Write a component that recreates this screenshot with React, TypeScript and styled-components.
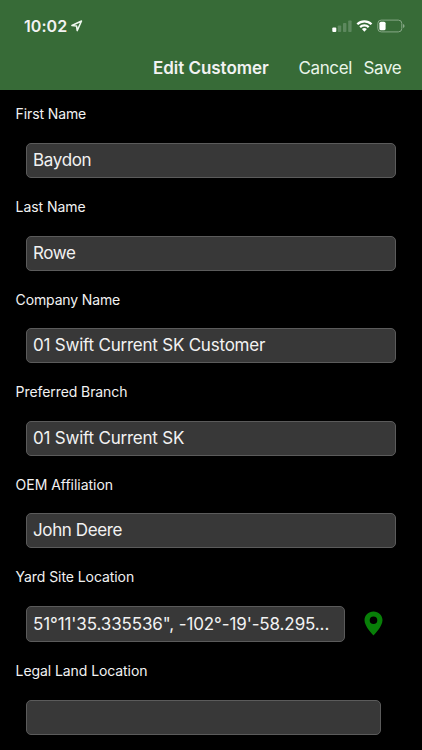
import React from "react";
import styled, { createGlobalStyle } from "styled-components";

const GlobalStyle = createGlobalStyle`
  * { box-sizing: border-box; }
  body { margin: 0; background: #000; overflow: hidden; }
`;

const Screen = styled.main`
  width: 422px;
  height: 750px;
  overflow: hidden;
  background: #000;
  color: #f2f2f2;
  font-family: Inter, sans-serif;
`;

const Header = styled.header`
  height: 90px;
  background: #376b37;
`;

const StatusBar = styled.div`
  display: flex;
  align-items: center;
  height: 50px;
  padding: 1px 16px 0 24px;
`;

const Time = styled.span`
  font-size: 16px;
  font-weight: 600;
  line-height: 20px;
  letter-spacing: 0.05px;
`;

const LocationArrow = styled.svg`
  margin-left: 4px;
`;

const StatusIcons = styled.svg`
  margin-left: auto;
`;

const NavBar = styled.nav`
  display: flex;
  align-items: center;
  height: 35px;
  padding-left: 153px;
`;

const Title = styled.h1`
  width: 145.5px;
  margin: 0;
  font-size: 17px;
  font-weight: 600;
  line-height: 24px;
  letter-spacing: -0.04px;
  white-space: nowrap;
`;

const NavButton = styled.button<{ $width: number }>`
  width: ${(p) => p.$width}px;
  padding: 0;
  border: 0;
  background: none;
  color: #e9f5e9;
  font: 400 17px/24px Inter, sans-serif;
  letter-spacing: -0.38px;
  text-align: left;
  white-space: nowrap;
`;

const Field = styled.section<{ $height: number }>`
  height: ${(p) => p.$height}px;
`;

const Label = styled.label<{ $spacing: number }>`
  display: block;
  height: 53px;
  padding: 14.4px 0 0 15.6px;
  font-size: 14px;
  line-height: 20px;
  letter-spacing: ${(p) => p.$spacing}px;
`;

const InputRow = styled.div`
  display: flex;
  align-items: center;
  padding-left: 25.5px;
`;

const Value = styled.div<{ $width: number; $height: number; $spacing: number }>`
  width: ${(p) => p.$width}px;
  height: ${(p) => p.$height}px;
  padding: 0 6.5px;
  border: 1px solid #5b5b5b;
  border-radius: 5px;
  background: #383838;
  font-size: 17px;
  line-height: ${(p) => p.$height - 2}px;
  letter-spacing: ${(p) => p.$spacing}px;
  white-space: nowrap;
`;

const Pin = styled.svg`
  margin-left: 18.5px;
`;

interface FieldData {
  label: string;
  value: string;
  pitch: number;
  labelSpacing: number;
  valueSpacing: number;
  width?: number;
  height?: number;
  pin?: boolean;
}

const fields: FieldData[] = [
  { label: "First Name", value: "Baydon", pitch: 92.6, labelSpacing: -0.12, valueSpacing: -0.33 },
  { label: "Last Name", value: "Rowe", pitch: 92.9, labelSpacing: -0.05, valueSpacing: -0.4 },
  { label: "Company Name", value: "01 Swift Current SK Customer", pitch: 92.5, labelSpacing: -0.14, valueSpacing: -0.22 },
  { label: "Preferred Branch", value: "01 Swift Current SK", pitch: 92.5, labelSpacing: -0.08, valueSpacing: -0.22 },
  { label: "OEM Affiliation", value: "John Deere", pitch: 92.5, labelSpacing: -0.03, valueSpacing: -0.38 },
  { label: "Yard Site Location", value: "51°11'35.335536\", -102°-19'-58.295...", pitch: 94, labelSpacing: -0.07, valueSpacing: -0.11, width: 319.8, height: 36, pin: true },
  { label: "Legal Land Location", value: "", pitch: 93, labelSpacing: -0.08, valueSpacing: 0, width: 355 },
];

export default function App() {
  return (
    <Screen>
      <GlobalStyle />
      <Header>
        <StatusBar>
          <Time>10:02</Time>
          <LocationArrow width="12" height="12" viewBox="0 0 12 12" fill="none" stroke="#eef6ee" strokeWidth="1.5" strokeLinejoin="round">
            <path d="M.9 5.5 10.5 1 6.2 10.6 5.6 6.1Z" />
          </LocationArrow>
          <StatusIcons width="74" height="18" viewBox="332 16.5 74 18">
            <rect x="332.3" y="27" width="4" height="4.5" rx="1" fill="#fff" />
            <g fill="#5d885e">
              <rect x="337.8" y="25" width="3.4" height="6.5" rx="0.8" />
              <rect x="343" y="22.5" width="3.4" height="9" rx="0.8" />
              <rect x="348.2" y="20" width="3.4" height="11.5" rx="0.8" />
            </g>
            <g fill="none" stroke="#fff" strokeWidth="2.3">
              <path d="M357.3 23.7a10.1 10.1 0 0 1 14.2 0" />
              <path d="M360.1 26.7a6.2 6.2 0 0 1 8.6 0" />
            </g>
            <path d="M361.9 28.6a3.7 3.7 0 0 1 5 0l-2.5 2.6Z" fill="#fff" />
            <rect x="377.8" y="19.6" width="24" height="11.8" rx="3.4" fill="none" stroke="#87a887" />
            <rect x="379.4" y="21.2" width="6.2" height="8.6" rx="1.6" fill="#fff" />
            <path d="M403 23.6q1.6.5 1.6 1.9t-1.6 1.9Z" fill="#87a887" />
          </StatusIcons>
        </StatusBar>
        <NavBar>
          <Title>Edit Customer</Title>
          <NavButton $width={65}>Cancel</NavButton>
          <NavButton $width={46}>Save</NavButton>
        </NavBar>
      </Header>
      {fields.map((f) => (
        <Field key={f.label} $height={f.pitch}>
          <Label $spacing={f.labelSpacing}>{f.label}</Label>
          <InputRow>
            <Value $width={f.width ?? 370.5} $height={f.height ?? 35} $spacing={f.valueSpacing}>{f.value}</Value>
            {f.pin && (
              <Pin width="19" height="25" viewBox="0 0 19 25" fill="#087f08" fillRule="evenodd">
                <path d="M9.5.5C4.5.5.5 4.4.5 9.3c0 6.5 9 15.2 9 15.2s9-8.7 9-15.2C18.5 4.4 14.5.5 9.5.5Zm0 4.9a3.8 3.8 0 1 1 0 7.6a3.8 3.8 0 0 1 0-7.6Z" />
              </Pin>
            )}
          </InputRow>
        </Field>
      ))}
    </Screen>
  );
}
